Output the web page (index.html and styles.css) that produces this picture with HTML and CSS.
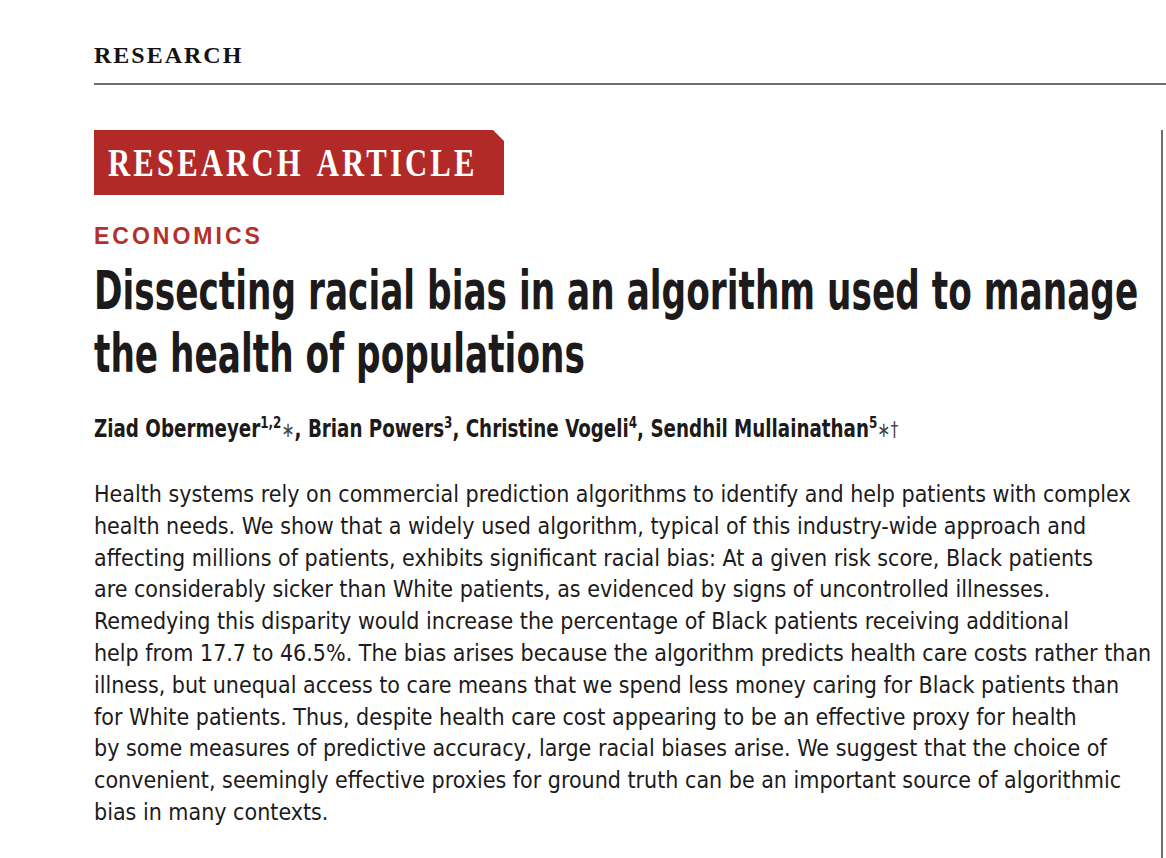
FILE: index.html
```html
<!DOCTYPE html>
<html lang="en">
<head>
<meta charset="utf-8">
<title>Dissecting racial bias in an algorithm used to manage the health of populations</title>
<link rel="stylesheet" href="styles.css">
</head>
<body>
<div class="page">
  <header class="masthead"><span class="masthead-label">RESEARCH</span></header>
  <main class="article">
    <div class="banner"><span class="banner-text">RESEARCH ARTICLE</span></div>
    <div class="section">ECONOMICS</div>
    <h1 class="title">
      <span class="line squeeze">Dissecting racial bias in an algorithm used to manage</span>
      <span class="line squeeze">the health of populations</span>
    </h1>
    <p class="authors"><span class="squeeze-authors">Ziad Obermeyer<sup>1,2</sup><span class="sym">∗</span>, Brian Powers<sup>3</sup>, Christine Vogeli<sup>4</sup>, Sendhil Mullainathan<sup>5</sup><span class="sym">∗†</span></span></p>
    <p class="abstract">
      <span class="line">Health systems rely on commercial prediction algorithms to identify and help patients with complex</span>
      <span class="line">health needs. We show that a widely used algorithm, typical of this industry-wide approach and</span>
      <span class="line">affecting millions of patients, exhibits significant racial bias: At a given risk score, Black patients</span>
      <span class="line">are considerably sicker than White patients, as evidenced by signs of uncontrolled illnesses.</span>
      <span class="line">Remedying this disparity would increase the percentage of Black patients receiving additional</span>
      <span class="line">help from 17.7 to 46.5%. The bias arises because the algorithm predicts health care costs rather than</span>
      <span class="line">illness, but unequal access to care means that we spend less money caring for Black patients than</span>
      <span class="line">for White patients. Thus, despite health care cost appearing to be an effective proxy for health</span>
      <span class="line">by some measures of predictive accuracy, large racial biases arise. We suggest that the choice of</span>
      <span class="line">convenient, seemingly effective proxies for ground truth can be an important source of algorithmic</span>
      <span class="line">bias in many contexts.</span>
    </p>
  </main>
</div>
</body>
</html>
```

FILE: styles.css
```css
html, body {
  margin: 0;
  padding: 0;
  background: #ffffff;
}

.page {
  width: 1166px;
  height: 858px;
  overflow: hidden;
  display: flex;
  flex-direction: column;
  color: #1c1a1a;
}

.masthead {
  margin-left: 94px;
  padding-top: 40px;
  padding-bottom: 13px;
  border-bottom: 2px solid #6e6e6e;
}

.masthead-label {
  display: block;
  font-family: "Liberation Serif", "Times New Roman", serif;
  font-weight: bold;
  font-size: 24px;
  line-height: 30px;
  letter-spacing: 2px;
  color: #141212;
}

.article {
  flex: 1;
  min-width: 0;
  margin-top: 45px;
  margin-right: 3px;
  padding-left: 94px;
  border-right: 2px solid #6e6e6e;
  display: flex;
  flex-direction: column;
  align-items: flex-start;
}

.banner {
  width: 410px;
  height: 65px;
  flex-shrink: 0;
  background: #b22a27;
  clip-path: polygon(0 0, 399px 0, 410px 11px, 410px 65px, 0 65px);
  display: flex;
  align-items: center;
  padding-left: 14px;
  box-sizing: border-box;
}

.banner-text {
  display: inline-block;
  font-family: "Liberation Serif", "Times New Roman", serif;
  font-weight: bold;
  font-size: 39px;
  line-height: 40px;
  letter-spacing: 4px;
  word-spacing: 5px;
  color: #ffffff;
  white-space: nowrap;
  transform: scaleX(0.787);
  transform-origin: left center;
}

.section {
  margin-top: 27px;
  font-family: "Liberation Sans", Arial, sans-serif;
  font-weight: bold;
  font-size: 23px;
  line-height: 28px;
  letter-spacing: 3px;
  color: #b3302b;
}

.title {
  margin: 9px 0 0 0;
  font-family: "DejaVu Sans Condensed", "DejaVu Sans", sans-serif;
  font-stretch: condensed;
  font-weight: bold;
  font-size: 52.5px;
  line-height: 63px;
  color: #1c1a1a;
}

.line {
  display: block;
  white-space: nowrap;
}

.squeeze {
  width: max-content;
  transform: scaleX(0.727);
  transform-origin: left center;
}

.authors {
  margin: 28.5px 0 0 0;
  font-family: "DejaVu Sans Condensed", "DejaVu Sans", sans-serif;
  font-stretch: condensed;
  font-weight: bold;
  font-size: 24.5px;
  line-height: 30px;
  white-space: nowrap;
}

.squeeze-authors {
  display: inline-block;
  transform: scaleX(0.83);
  transform-origin: left center;
}

.authors sup {
  font-size: 16px;
  line-height: 0;
  vertical-align: 9px;
}

.sym {
  font-family: "DejaVu Sans", sans-serif;
  font-weight: normal;
  color: #444;
  font-size: 21px;
}

.abstract {
  margin: 34.5px 0 0 0;
  font-family: "DejaVu Sans Condensed", "DejaVu Sans", sans-serif;
  font-stretch: condensed;
  font-size: 23px;
  line-height: 31.8px;
  color: #1c1a1a;
}
```
